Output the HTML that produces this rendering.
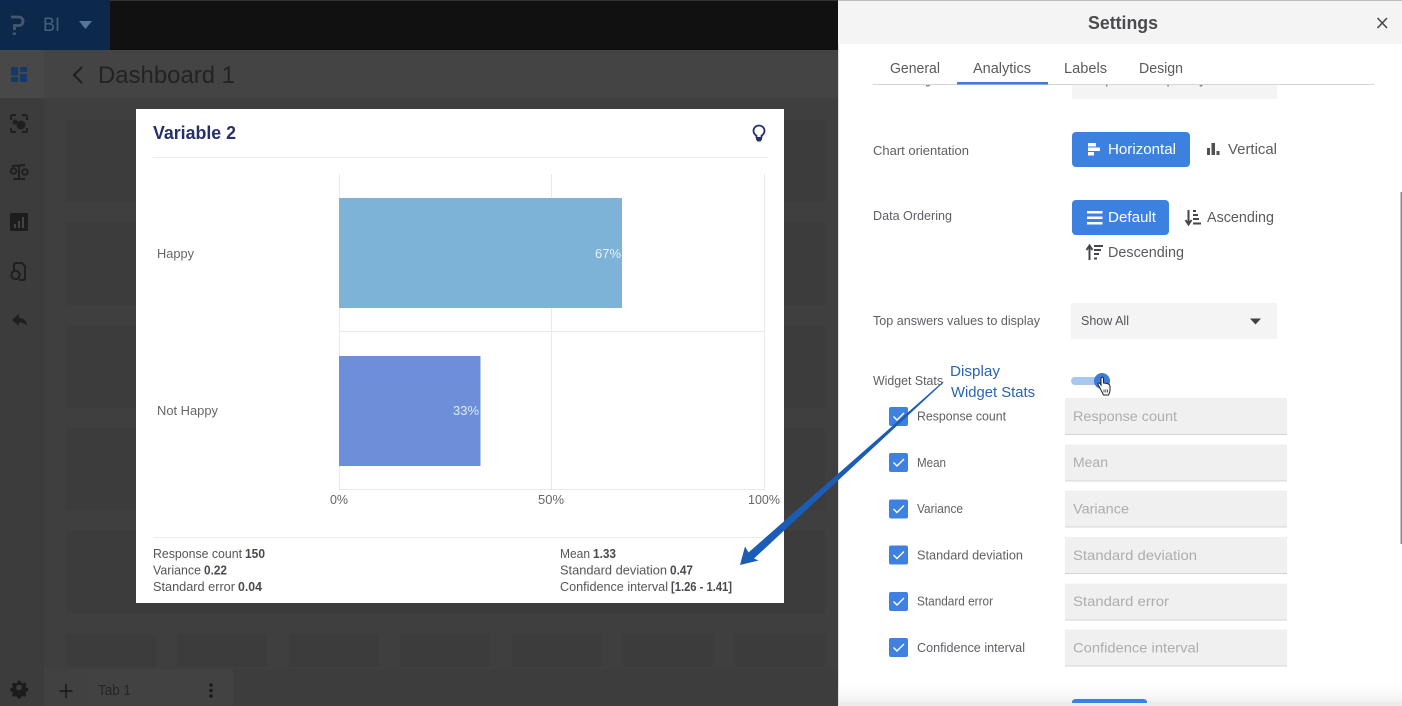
<!DOCTYPE html>
<html><head><meta charset="utf-8"><title>Settings</title>
<style>
html,body{margin:0;padding:0;background:#3f3f3f;width:1402px;height:706px;overflow:hidden}
svg{display:block;font-family:"Liberation Sans",sans-serif}
text{white-space:pre}
.l{font-size:12.5px;fill:#5f5f66}
.p{font-size:14px;fill:#adadb0}
.n{font-size:14.5px;fill:#5a5a60}
.s{font-size:12.5px;fill:#55555c}
.b{font-size:12.5px;fill:#4a4a52;font-weight:bold}
.a{font-size:13px;fill:#666}
</style></head><body>
<svg width="1402" height="706" viewBox="0 0 1402 706" xmlns="http://www.w3.org/2000/svg">
<defs><linearGradient id="fade" x1="0" y1="0" x2="0" y2="1"><stop offset="0" stop-color="#fff" stop-opacity="0"/><stop offset="1" stop-color="#ececec"/></linearGradient></defs>
<!-- backdrop -->
<rect width="1402" height="706" fill="#3f3f3f"/>
<rect y="0" width="838" height="50" fill="#111"/>
<rect y="0" width="838" height="1" fill="#333"/>
<rect width="110" height="50" fill="#0c284b"/>
<rect y="50" width="44" height="656" fill="#3c3c3c"/>
<rect y="50" width="838" height="48" fill="#444"/>
<rect y="50" width="44" height="48" fill="#484848"/>
<g fill="#3c3c3c">
<rect x="66" y="120" width="759" height="82"/><rect x="66" y="222" width="759" height="83"/><rect x="66" y="325" width="759" height="83"/><rect x="66" y="428" width="759" height="82"/><rect x="66" y="531" width="759" height="82"/>
<rect x="66" y="634" width="90" height="33"/><rect x="177" y="634" width="90" height="33"/><rect x="289" y="634" width="90" height="33"/><rect x="400" y="634" width="90" height="33"/><rect x="512" y="634" width="90" height="33"/><rect x="623" y="634" width="90" height="33"/><rect x="735" y="634" width="90" height="33"/>
</g>
<rect x="44" y="669" width="794" height="37" fill="#3d3d3d"/>
<rect x="44" y="669" width="44" height="37" fill="#414141"/>
<rect x="88" y="669" width="145" height="37" fill="#424242"/>
<!-- top bar content -->
<path d="M11 17H18.500C21.500 17 23 18.800 23 21.200C23 23.600 21.500 25.500 18.500 25.500H14.500V30" fill="none" stroke="#46586e" stroke-width="2.800"/>
<rect x="12.800" y="32.500" width="3" height="2.500" fill="#46586e"/>
<text x="43" y="31" font-size="19" fill="#46617f" textLength="17" lengthAdjust="spacingAndGlyphs">BI</text>
<path d="M79 21H92L85.500 29Z" fill="#56779a"/>
<path d="M82 67L74 75L82 83" fill="none" stroke="#202020" stroke-width="2.200"/>
<text x="98" y="83" font-size="24" fill="#232323" textLength="137" lengthAdjust="spacingAndGlyphs">Dashboard 1</text>
<!-- sidebar icons -->
<g fill="#123a6c"><rect x="11" y="67" width="7" height="8.500"/><rect x="20" y="67" width="7" height="5"/><rect x="11" y="77" width="7" height="5"/><rect x="20" y="74" width="7" height="8"/></g>
<g fill="none" stroke="#1f1f1f" stroke-width="2">
<path d="M11 120V117Q11 115 13 115H16M22 115H25Q27 115 27 117V120M27 128V130Q27 132 25 132H22M16 132H13Q11 132 11 130V128"/>
<path d="M19 165V179M13 179H25M12 166L25 165"/>
<circle cx="13.500" cy="171" r="2.800"/><circle cx="25" cy="172" r="2.800"/>
<path d="M14 270V265Q14 263 16 263H22L25 266V278Q25 280 23 280H19"/>
<circle cx="15.500" cy="275" r="4.200"/>
</g>
<circle cx="21" cy="125" r="4.500" fill="#1f1f1f"/><circle cx="15" cy="122" r="2.500" fill="#1f1f1f"/>
<rect x="10" y="213" width="18" height="18" rx="1.500" fill="#1d1d1d"/>
<g fill="#444"><rect x="14" y="224" width="2" height="4"/><rect x="18" y="221" width="2" height="7"/><rect x="22" y="217" width="2" height="11"/></g>
<path d="M12 320L19 314V318C24 318 27 321 27 326C25 323 23 322.500 19 322.500V326Z" fill="#1f1f1f"/>
<path d="M19 680.500l1.600.3.5 1.900 1.700.7 1.700-1 2 2-1 1.700.7 1.700 1.900.5v2.800l-1.900.5-.7 1.700 1 1.700-2 2-1.700-1-1.700.7-.5 1.900h-2.800l-.5-1.900-1.700-.7-1.700 1-2-2 1-1.700-.7-1.700-1.900-.5v-2.800l1.900-.5.7-1.700-1-1.700 2-2 1.700 1 1.700-.7.5-1.900z" fill="#1c1c1c"/>
<circle cx="19" cy="687.500" r="2.800" fill="#3c3c3c"/>
<path d="M66 684V698M59.500 691H72.500" stroke="#111" stroke-width="1.300" fill="none"/>
<text x="98" y="695" font-size="14.500" fill="#262626" textLength="33" lengthAdjust="spacingAndGlyphs">Tab 1</text>
<g fill="#1a1a1a"><circle cx="211" cy="685" r="1.800"/><circle cx="211" cy="690.500" r="1.800"/><circle cx="211" cy="696" r="1.800"/></g>
<!-- card -->
<rect x="136" y="109" width="648" height="494" fill="#fff"/>
<text x="153" y="139" font-size="18" font-weight="bold" fill="#25306a" textLength="83" lengthAdjust="spacingAndGlyphs">Variable 2</text>
<path d="M756.500 138V135.800C754.600 134.500 753.500 132.800 753.500 130.800C753.500 127.800 756 125.500 759 125.500C762 125.500 764.500 127.800 764.500 130.800C764.500 132.800 763.400 134.500 761.500 135.800V138" fill="none" stroke="#25306a" stroke-width="1.800"/>
<path d="M756 137H762V139.500L760.500 141.500H757.500L756 139.500Z" fill="#25306a"/>
<rect x="153" y="157" width="615" height="1" fill="#ececee"/>
<g fill="#e9e9eb"><rect x="339" y="174" width="1" height="315"/><rect x="551" y="174" width="1" height="315"/><rect x="764" y="174" width="1" height="315"/><rect x="339" y="331" width="426" height="1"/><rect x="339" y="489" width="426" height="1"/></g>
<rect x="339" y="198" width="283" height="110" fill="#7cb3d7"/>
<rect x="339" y="356" width="141.500" height="110" fill="#6d8ed8"/>
<text x="595" y="258" font-size="13" fill="#e8f1f7" textLength="26" lengthAdjust="spacingAndGlyphs">67%</text>
<text x="453" y="415" font-size="13" fill="#e3e9f8" textLength="26" lengthAdjust="spacingAndGlyphs">33%</text>
<text x="157" y="258" class="a" textLength="37" lengthAdjust="spacingAndGlyphs">Happy</text>
<text x="157" y="415" class="a" textLength="61" lengthAdjust="spacingAndGlyphs">Not Happy</text>
<text x="330" y="504" class="a" textLength="18" lengthAdjust="spacingAndGlyphs">0%</text>
<text x="538" y="504" class="a" textLength="26" lengthAdjust="spacingAndGlyphs">50%</text>
<text x="748" y="504" class="a" textLength="32" lengthAdjust="spacingAndGlyphs">100%</text>
<rect x="153" y="537" width="615" height="1" fill="#ececee"/>
<text x="153" y="558" class="s" textLength="89" lengthAdjust="spacingAndGlyphs">Response count</text><text x="245" y="558" class="b" textLength="20" lengthAdjust="spacingAndGlyphs">150</text>
<text x="153" y="574.500" class="s" textLength="48" lengthAdjust="spacingAndGlyphs">Variance</text><text x="204" y="574.500" class="b" textLength="23" lengthAdjust="spacingAndGlyphs">0.22</text>
<text x="153" y="591" class="s" textLength="82" lengthAdjust="spacingAndGlyphs">Standard error</text><text x="238" y="591" class="b" textLength="24" lengthAdjust="spacingAndGlyphs">0.04</text>
<text x="560" y="558" class="s" textLength="30" lengthAdjust="spacingAndGlyphs">Mean</text><text x="593" y="558" class="b" textLength="23" lengthAdjust="spacingAndGlyphs">1.33</text>
<text x="560" y="574.500" class="s" textLength="107" lengthAdjust="spacingAndGlyphs">Standard deviation</text><text x="670" y="574.500" class="b" textLength="23" lengthAdjust="spacingAndGlyphs">0.47</text>
<text x="560" y="591" class="s" textLength="108" lengthAdjust="spacingAndGlyphs">Confidence interval</text><text x="671" y="591" class="b" textLength="61" lengthAdjust="spacingAndGlyphs">[1.26 - 1.41]</text>
<!-- settings panel -->
<rect x="838" y="0" width="564" height="706" fill="#fff"/>
<rect x="838" y="0" width="1" height="706" fill="#e0e0e0"/>
<rect x="838" y="0" width="564" height="44" fill="#f4f4f4"/>
<rect x="838" y="0" width="564" height="1" fill="#bdbdbd"/>
<text x="1088" y="29" font-size="18" font-weight="bold" fill="#4b4b4f" textLength="70" lengthAdjust="spacingAndGlyphs">Settings</text>
<path d="M1377.500 18L1387 28M1387 18L1377.500 28" stroke="#444" stroke-width="1.500" fill="none"/>
<rect x="1072" y="85" width="205" height="14" fill="#f4f4f4"/>
<text x="873" y="84" class="l" textLength="58" lengthAdjust="spacingAndGlyphs">Data sorting</text>
<text x="1081" y="84" class="l" textLength="125" lengthAdjust="spacingAndGlyphs">Response frequency</text>
<rect x="839" y="44" width="563" height="40" fill="#fff"/>
<text x="890" y="73" class="n" textLength="50" lengthAdjust="spacingAndGlyphs">General</text>
<text x="973" y="73" class="n" textLength="58" lengthAdjust="spacingAndGlyphs">Analytics</text>
<text x="1064" y="73" class="n" textLength="43" lengthAdjust="spacingAndGlyphs">Labels</text>
<text x="1139" y="73" class="n" textLength="44" lengthAdjust="spacingAndGlyphs">Design</text>
<rect x="873" y="84" width="501" height="1" fill="#d6d6d8"/>
<rect x="957" y="82" width="91" height="2.500" fill="#3c7dd6"/>
<text x="873" y="155" class="l" textLength="96" lengthAdjust="spacingAndGlyphs">Chart orientation</text>
<rect x="1072" y="132" width="118" height="35" rx="4" fill="#3c80e0"/>
<g fill="#fff"><rect x="1088" y="143" width="8" height="3.500"/><rect x="1088" y="147.500" width="12" height="3.500"/><rect x="1088" y="152" width="6" height="3.500"/></g>
<text x="1108" y="154" font-size="14.500" fill="#fff" textLength="68" lengthAdjust="spacingAndGlyphs">Horizontal</text>
<g fill="#505055"><rect x="1207" y="148" width="3" height="7"/><rect x="1211.500" y="143" width="3.500" height="12"/><rect x="1216.500" y="151" width="3" height="4"/></g>
<text x="1228" y="154" class="n" textLength="49" lengthAdjust="spacingAndGlyphs">Vertical</text>
<text x="873" y="220" class="l" textLength="79" lengthAdjust="spacingAndGlyphs">Data Ordering</text>
<rect x="1072" y="200" width="97" height="35" rx="4" fill="#3c80e0"/>
<g fill="#fff"><rect x="1087" y="211" width="15.500" height="2.500"/><rect x="1087" y="216.500" width="15.500" height="2.500"/><rect x="1087" y="222" width="15.500" height="2.500"/></g>
<text x="1108" y="222" font-size="14.500" fill="#fff" textLength="48" lengthAdjust="spacingAndGlyphs">Default</text>
<path d="M1188.500 210V223M1185.500 220L1188.500 224.500L1191.500 220" stroke="#45454a" stroke-width="2" fill="none"/>
<g fill="#45454a"><rect x="1193" y="210" width="3" height="2"/><rect x="1193" y="214" width="5" height="2"/><rect x="1193" y="218" width="6" height="2"/><rect x="1193" y="222.500" width="8" height="2"/></g>
<text x="1207" y="222" class="n" textLength="67" lengthAdjust="spacingAndGlyphs">Ascending</text>
<path d="M1089.500 260V247M1086.500 250L1089.500 245.500L1092.500 250" stroke="#45454a" stroke-width="2" fill="none"/>
<g fill="#45454a"><rect x="1094" y="245" width="9" height="2"/><rect x="1094" y="249" width="7" height="2"/><rect x="1094" y="253" width="5" height="2"/><rect x="1094" y="257.500" width="3" height="2"/></g>
<text x="1108" y="257" class="n" textLength="76" lengthAdjust="spacingAndGlyphs">Descending</text>
<text x="873" y="325" class="l" textLength="167" lengthAdjust="spacingAndGlyphs">Top answers values to display</text>
<rect x="1071" y="303" width="206" height="36" fill="#f4f4f4"/>
<text x="1081" y="325" font-size="12.500" fill="#55555c" textLength="48" lengthAdjust="spacingAndGlyphs">Show All</text>
<path d="M1250 318.500H1261L1255.500 324.500Z" fill="#3f3f44"/>
<text x="873" y="385" class="l" textLength="70" lengthAdjust="spacingAndGlyphs">Widget Stats</text>
<text x="950" y="376" font-size="14.500" fill="#2a64b4" textLength="50" lengthAdjust="spacingAndGlyphs">Display</text>
<text x="951" y="397" font-size="14.500" fill="#2a64b4" textLength="84" lengthAdjust="spacingAndGlyphs">Widget Stats</text>
<rect x="1071" y="377" width="32" height="8" rx="4" fill="#a9c6ef"/>
<circle cx="1102" cy="381" r="8" fill="#3b7cd9"/>
<path d="M1101 390L1098 384.500C1097.500 383 1099 382.500 1100 383.500L1101 385V378.500C1101 376.800 1103.500 376.800 1103.500 378.500V383L1107 383.500C1109 384 1110 385 1110 386.500V390C1110 392 1109 394 1108.500 395H1103.500Z" fill="#fff" stroke="#222" stroke-width="1"/>
<path d="M1104 389.500V392.500M1105.800 389.500V392.500M1107.600 389.500V392.500" stroke="#333" stroke-width=".8"/>
<!-- rows -->
<g>
<rect x="1065" y="398" width="222" height="36" fill="#f0f0f0"/><rect x="1065" y="434" width="222" height="1" fill="#d4d4d6"/>
<rect x="1065" y="444.500" width="222" height="36" fill="#f0f0f0"/><rect x="1065" y="480.500" width="222" height="1" fill="#d4d4d6"/>
<rect x="1065" y="490.500" width="222" height="36" fill="#f0f0f0"/><rect x="1065" y="526.500" width="222" height="1" fill="#d4d4d6"/>
<rect x="1065" y="537" width="222" height="36" fill="#f0f0f0"/><rect x="1065" y="573" width="222" height="1" fill="#d4d4d6"/>
<rect x="1065" y="583.500" width="222" height="36" fill="#f0f0f0"/><rect x="1065" y="619.500" width="222" height="1" fill="#d4d4d6"/>
<rect x="1065" y="629.500" width="222" height="36" fill="#f0f0f0"/><rect x="1065" y="665.500" width="222" height="1" fill="#d4d4d6"/>
</g>
<g fill="#3f81e0">
<rect x="889" y="407" width="19" height="19" rx="2"/><rect x="889" y="453" width="19" height="19" rx="2"/><rect x="889" y="499.500" width="19" height="19" rx="2"/><rect x="889" y="545.500" width="19" height="19" rx="2"/><rect x="889" y="592" width="19" height="19" rx="2"/><rect x="889" y="638" width="19" height="19" rx="2"/>
</g>
<g fill="none" stroke="#fff" stroke-width="1.400">
<path d="M893.500 416.500L897 420L904 413"/><path d="M893.500 462.500L897 466L904 459"/><path d="M893.500 509L897 512.500L904 505.500"/><path d="M893.500 555L897 558.500L904 551.500"/><path d="M893.500 601.500L897 605L904 598"/><path d="M893.500 647.500L897 651L904 644"/>
</g>
<text x="917" y="420.500" class="l" textLength="89" lengthAdjust="spacingAndGlyphs">Response count</text>
<text x="917" y="467" class="l" textLength="29" lengthAdjust="spacingAndGlyphs">Mean</text>
<text x="917" y="513" class="l" textLength="46" lengthAdjust="spacingAndGlyphs">Variance</text>
<text x="917" y="559.500" class="l" textLength="106" lengthAdjust="spacingAndGlyphs">Standard deviation</text>
<text x="917" y="605.500" class="l" textLength="76" lengthAdjust="spacingAndGlyphs">Standard error</text>
<text x="917" y="652" class="l" textLength="108" lengthAdjust="spacingAndGlyphs">Confidence interval</text>
<text x="1073" y="421" class="p" textLength="104" lengthAdjust="spacingAndGlyphs">Response count</text>
<text x="1073" y="467" class="p" textLength="35" lengthAdjust="spacingAndGlyphs">Mean</text>
<text x="1073" y="513.500" class="p" textLength="56" lengthAdjust="spacingAndGlyphs">Variance</text>
<text x="1073" y="560" class="p" textLength="124" lengthAdjust="spacingAndGlyphs">Standard deviation</text>
<text x="1073" y="606" class="p" textLength="96" lengthAdjust="spacingAndGlyphs">Standard error</text>
<text x="1073" y="652.500" class="p" textLength="126" lengthAdjust="spacingAndGlyphs">Confidence interval</text>
<rect x="839" y="676" width="563" height="26" fill="url(#fade)" opacity=".7"/>
<rect x="839" y="702" width="563" height="4" fill="#ececec"/>
<path d="M1072 702V703H1147V702C1147 700 1145 699 1143 699H1076C1074 699 1072 700 1072 702Z" fill="#3c80e0"/>
<rect x="1400.500" y="192" width="1.500" height="352" fill="#8a8a8a"/>
<!-- arrow -->
<path d="M943 381.500L943.500 382.500L754 558.500L758.500 560.500L740 565L745 546.500L748.500 552.500Z" fill="#1b5cb6"/>
</svg>
</body></html>
